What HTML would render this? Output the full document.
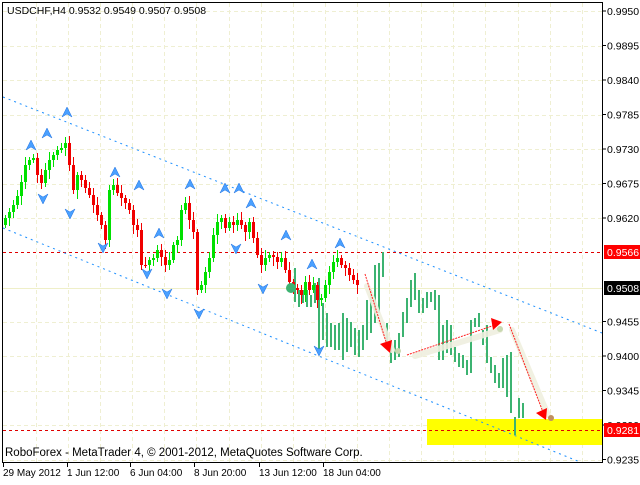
<!DOCTYPE html>
<html><head><meta charset="utf-8"><style>
html,body{margin:0;padding:0;background:#fff;}
body{width:640px;height:480px;overflow:hidden;font-family:"Liberation Sans",sans-serif;}
svg text{font-family:"Liberation Sans",sans-serif;font-size:11px;}
</style></head><body>
<svg id="s" width="640" height="480" xmlns="http://www.w3.org/2000/svg">
<g id="grid" stroke="#efefd2" stroke-width="1" stroke-dasharray="4,3"></g>
<rect x="427" y="419" width="175" height="26" fill="#ffff00"/>
<line x1="3" y1="288.5" x2="602" y2="288.5" stroke="#efefc8" stroke-width="1"/>
<line x1="3" y1="252.5" x2="602" y2="252.5" stroke="#e00000" stroke-dasharray="3,3"/>
<line x1="3" y1="430.5" x2="602" y2="430.5" stroke="#e00000" stroke-dasharray="3,3"/>
<line x1="3" y1="97" x2="602" y2="333" stroke="#1e90ff" stroke-dasharray="2,4"/>
<line x1="3" y1="228" x2="580" y2="462" stroke="#1e90ff" stroke-dasharray="2,4"/>
<g id="bars" fill="#3cb371"></g>
<g id="candles"></g>
<g id="fr" fill="#4aa0ff" stroke="#1e70e0" stroke-width="0.5"></g>
<circle cx="291" cy="288" r="5" fill="#3cb371"/>
<g stroke="#efefdf" stroke-width="6" stroke-linecap="round" fill="none" opacity="0.9">
<line x1="367" y1="286" x2="392" y2="350"/><line x1="415" y1="356" x2="500" y2="330"/><line x1="512" y1="330" x2="548" y2="415"/>
</g>
<g stroke="#ff2020" stroke-width="1" stroke-dasharray="2,1" fill="none">
<line x1="365" y1="274" x2="387" y2="345"/><line x1="407" y1="355" x2="495" y2="325"/><line x1="509" y1="324" x2="543" y2="412"/>
</g>
<g fill="#ff0000">
<polygon points="390,353 380,344 392,340"/><polygon points="502,322 491,318 493,330"/><polygon points="546,420 536,413 547,408"/>
</g>
<circle cx="398" cy="351" r="3" fill="#c8d8b0"/><circle cx="500" cy="329" r="3" fill="#c8d8b0"/><circle cx="551" cy="418" r="3" fill="#c09060"/>
<g id="labels"></g>
<line x1="2.5" y1="2" x2="2.5" y2="462" stroke="#000"/>
<line x1="2" y1="2.5" x2="602" y2="2.5" stroke="#000"/>
<line x1="602.5" y1="2" x2="602.5" y2="462" stroke="#000"/>
<line x1="2" y1="462.5" x2="603" y2="462.5" stroke="#000"/>
<text x="7" y="14" style="font-size:10.5px">USDCHF,H4  0.9532 0.9549 0.9507 0.9508</text>
<text x="5" y="456" style="font-size:11.5px">RoboForex - MetaTrader 4, © 2001-2012, MetaQuotes Software Corp.</text>
<g id="dates"></g>
</svg>
<script>
var NS="http://www.w3.org/2000/svg";
function el(p,t,a,txt){var e=document.createElementNS(NS,t);for(var k in a)e.setAttribute(k,a[k]);if(txt)e.textContent=txt;document.getElementById(p).appendChild(e);return e;}
var prices=["0.9950","0.9895","0.9840","0.9785","0.9730","0.9675","0.9620","0.9566","0.9508","0.9455","0.9400","0.9345","0.9290","0.9281","0.9235"];
var ys=[11,45.5,80,114.5,149,183.5,218,252,288,321.5,356,390.5,425,430,459.5];
for(var i=0;i<14;i++){var y=Math.round(11+i*34.5)+0.5;if(i!=7&&i!=8)el('grid','line',{x1:3,y1:y,x2:602,y2:y});}
for(var x=36;x<602;x+=32.1){el('grid','line',{x1:Math.round(x)+0.5,y1:3,x2:Math.round(x)+0.5,y2:462});}
for(var i=0;i<prices.length;i++){
 if(i==7||i==13)el('labels','rect',{x:604,y:ys[i]-7,width:36,height:14,fill:'#ff0000'});
 if(i==8)el('labels','rect',{x:604,y:ys[i]-7,width:36,height:14,fill:'#000'});
 var col=(i==7||i==8||i==13)?'#fff':'#000';
 if(i!=7&&i!=8&&i!=13)el('labels','line',{x1:602,y1:ys[i],x2:606,y2:ys[i],stroke:'#000'});
 el('labels','text',{x:607,y:ys[i]+4,style:'fill:'+col+';font-size:10.5px'},prices[i]);}
var d=[["29 May 2012",3],["1 Jun 12:00",67],["6 Jun 04:00",130],["8 Jun 20:00",194],["13 Jun 12:00",259],["18 Jun 04:00",323]];
d.forEach(function(a){el('dates','text',{x:a[1],y:476,style:'font-size:10px'},a[0]);el('dates','line',{x1:a[1]+0.5,y1:462,x2:a[1]+0.5,y2:467,stroke:'#000'});});
var b=[[295,268,302],[299,290,307],[303,290,303],[307,290,307],[311,295,307],[315,283,303],[319,278,350],[323,303,340],[327,313,347],[331,323,347],[335,325,350],[339,323,350],[343,313,360],[347,318,352],[351,322,347],[355,328,355],[359,330,357],[363,325,350],[367,300,340],[371,290,333],[375,265,323],[379,263,313],[383,252,277],[387,323,343],[391,340,363],[395,340,360],[399,333,357],[403,312,337],[407,298,323],[411,280,307],[415,273,300],[419,290,313],[423,298,313],[427,292,308],[431,292,302],[435,290,310],[439,295,360],[443,325,360],[447,320,353],[451,325,355],[455,347,362],[459,353,367],[463,355,368],[467,360,375],[471,320,373],[475,318,327],[479,313,327],[483,330,345],[487,325,363],[491,357,373],[495,365,383],[499,373,388],[503,358,388],[507,355,397],[511,352,413],[515,417,435],[519,398,418],[523,403,418]];
b.forEach(function(a){el('bars','rect',{x:a[0]-1,y:a[1],width:2,height:a[2]-a[1]});});
var c=[218,212,205,196,182,165,160,158,175,183,170,160,155,150,148,143,165,190,175,180,188,195,205,215,225,240,190,185,193,198,203,210,225,230,265,265,260,258,250,257,265,260,245,240,210,203,220,232,290,285,272,258,235,222,218,228,222,225,220,225,232,222,238,255,265,258,255,257,262,258,270,282,288,290,295,282,290,285,300,298,285,272,262,258,265,268,275,280,285];
var prev=225;
for(var i=0;i<c.length;i++){var x=5+i*4,o=prev,cl=c[i],isUp=cl<o,col=isUp?'#00e000':'#f00000';
 var t=Math.min(o,cl),bt=Math.max(o,cl),h=t-3-(i*7%6),l=bt+3+(i*5%7);
 el('candles','line',{x1:x+0.5,y1:h,x2:x+0.5,y2:l,stroke:col});
 el('candles','rect',{x:x-1,y:t,width:3,height:Math.max(1,bt-t),fill:col});prev=cl;}
function fu(x,y){el('fr','path',{d:'M'+x+' '+(y-6)+'L'+(x+5)+' '+(y+4)+'L'+x+' '+(y+1)+'L'+(x-5)+' '+(y+4)+'Z'});}
function fd(x,y){el('fr','path',{d:'M'+x+' '+(y+6)+'L'+(x+5)+' '+(y-4)+'L'+x+' '+(y-1)+'L'+(x-5)+' '+(y-4)+'Z'});}
[[67,113],[47,134],[31,146],[115,173],[139,186],[190,185],[225,189],[239,189],[251,204],[286,236],[340,244],[159,234],[312,265]].forEach(function(a){fu(a[0],a[1]);});
[[43,198],[70,213],[103,247],[147,273],[167,293],[199,313],[236,248],[263,288],[319,350]].forEach(function(a){fd(a[0],a[1]);});
</script>
</body></html>
